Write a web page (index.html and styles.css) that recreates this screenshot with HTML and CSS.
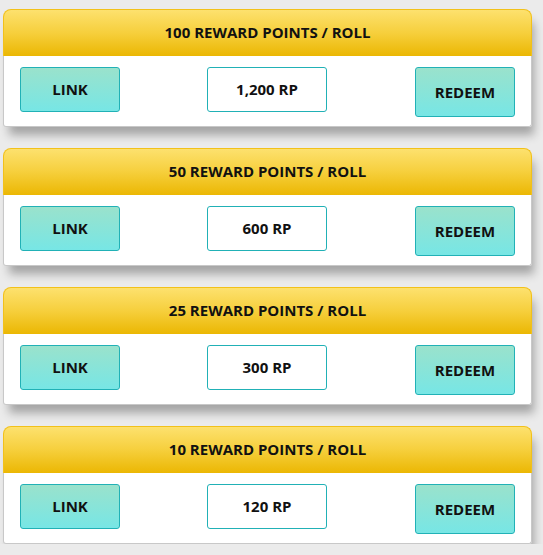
FILE: index.html
```html
<!DOCTYPE html>
<html>
<head>
<meta charset="utf-8">
<link rel="stylesheet" href="styles.css">
</head>
<body>
<div class="list">
  <div class="card">
    <div class="card-head">100 REWARD POINTS / ROLL</div>
    <div class="card-body">
      <div class="btn btn-link">LINK</div>
      <div class="price">1,200 RP</div>
      <div class="btn btn-redeem">REDEEM</div>
    </div>
  </div>
  <div class="card">
    <div class="card-head">50 REWARD POINTS / ROLL</div>
    <div class="card-body">
      <div class="btn btn-link">LINK</div>
      <div class="price">600 RP</div>
      <div class="btn btn-redeem">REDEEM</div>
    </div>
  </div>
  <div class="card">
    <div class="card-head">25 REWARD POINTS / ROLL</div>
    <div class="card-body">
      <div class="btn btn-link">LINK</div>
      <div class="price">300 RP</div>
      <div class="btn btn-redeem">REDEEM</div>
    </div>
  </div>
  <div class="card">
    <div class="card-head">10 REWARD POINTS / ROLL</div>
    <div class="card-body">
      <div class="btn btn-link">LINK</div>
      <div class="price">120 RP</div>
      <div class="btn btn-redeem">REDEEM</div>
    </div>
  </div>
</div>
</body>
</html>
```
FILE: styles.css
```css
html, body {
  margin: 0;
  padding: 0;
  background: #ebebeb;
}
body {
  font-family: "Open Sans", "Liberation Sans", sans-serif;
  font-weight: 700;
  font-size: 15px;
  color: #111;
}
.list {
  display: flex;
  flex-direction: column;
  gap: 21px;
  padding: 9px 11px 0 3px;
}
.card {
  width: 529px;
  border-radius: 8px 8px 3px 3px;
  box-shadow: 4px 10px 10px -2px rgba(0,0,0,0.3);
}
.card-head {
  box-sizing: border-box;
  height: 47px;
  border: 1px solid #f2c11a;
  border-bottom: none;
  border-radius: 8px 8px 0 0;
  background: linear-gradient(to bottom, #fde16e 0%, #f6cf3c 50%, #ebb703 100%);
  display: flex;
  align-items: center;
  justify-content: center;
  padding-bottom: 2px;
}
.card-body {
  box-sizing: border-box;
  height: 71px;
  background: #fff;
  border: 1px solid #c8c8c8;
  border-top: none;
  border-radius: 0 0 3px 3px;
  padding: 11px 16px 0 16px;
  display: flex;
  gap: 87px;
  align-items: flex-start;
}
.btn {
  box-sizing: border-box;
  width: 100px;
  border: 1px solid #21b1b6;
  border-radius: 3px;
  background: linear-gradient(to bottom, #9ae2cc 0%, #77e6e5 100%);
  display: flex;
  align-items: center;
  justify-content: center;
  padding-bottom: 1px;
}
.btn-link {
  height: 45px;
}
.btn-redeem {
  height: 50px;
  margin-left: auto;
}
.price {
  box-sizing: border-box;
  width: 120px;
  height: 45px;
  border: 1px solid #21b1b6;
  border-radius: 3px;
  background: #fff;
  display: flex;
  align-items: center;
  justify-content: center;
  padding-bottom: 1px;
}
```
